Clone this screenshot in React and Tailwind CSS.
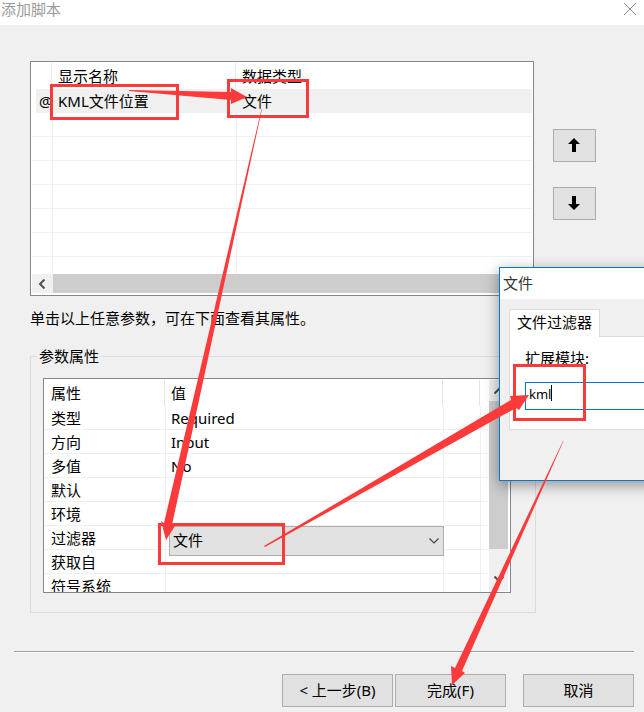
import clsx from "clsx";

const parameters = [
  { id: 1, mark: "@", name: "KML文件位置", type: "文件" },
  { id: 2 },
  { id: 3 },
  { id: 4 },
  { id: 5 },
  { id: 6 },
  { id: 7 },
  { id: 8 },
];

const properties = [
  { name: "类型", value: "Required" },
  { name: "方向", value: "Input" },
  { name: "多值", value: "No" },
  { name: "默认", value: "" },
  { name: "环境", value: "" },
  { name: "过滤器", value: "文件", filter: true },
  { name: "获取自", value: "" },
  { name: "符号系统", value: "" },
];

const HeaderCell = ({ children, className, last }) => (
  <th className="h-[27px] p-0 text-left font-normal">
    <div
      className={clsx(
        "h-[26px] leading-[26px] mr-px",
        !last && "border-r border-[#e5e5e5]",
        className
      )}
    >
      {children}
    </div>
  </th>
);

const DialogButton = ({ children, className, label }) => (
  <button
    aria-label={label}
    className={clsx(
      "h-[33px] flex items-center justify-center bg-[#e1e1e1] border border-[#adadad]",
      className
    )}
  >
    {children}
  </button>
);

const ParameterList = () => (
  <div className="flex-1 min-w-0 bg-white border border-[#828790] px-px pb-[2px]">
    <div className="h-[212px] overflow-hidden">
      <table className="w-full table-fixed border-separate border-spacing-0">
        <colgroup>
          <col className="w-[21px]" />
          <col className="w-[184px]" />
          <col />
        </colgroup>
        <thead>
          <tr>
            <HeaderCell />
            <HeaderCell className="pl-[5px]">显示名称</HeaderCell>
            <HeaderCell className="pl-[5px]" last>
              数据类型
            </HeaderCell>
          </tr>
        </thead>
        <tbody>
          {parameters.map((item) => {
            const rowStyle = item.mark
              ? "bg-[#f0f0f0] leading-6"
              : "border-b leading-[23px]";
            return (
              <tr key={item.id}>
                <td
                  className={clsx(
                    "h-6 p-0 border-r border-[#f0f0f0]",
                    !item.mark && "border-b"
                  )}
                >
                  {item.mark && (
                    <div className="ml-1 pl-[3px] bg-[#f0f0f0] leading-6">
                      {item.mark}
                    </div>
                  )}
                </td>
                <td
                  className={clsx(
                    "h-6 p-0 pl-[5px] border-r border-[#f0f0f0]",
                    rowStyle
                  )}
                >
                  {item.name}
                </td>
                <td
                  className={clsx("h-6 p-0 pl-[5px] border-[#f0f0f0]", rowStyle)}
                >
                  {item.type}
                </td>
              </tr>
            );
          })}
        </tbody>
      </table>
    </div>
    <div className="h-[19px] flex bg-[#cdcdcd]">
      <button
        aria-label="向左滚动"
        className="w-[21px] pr-[2px] flex items-center justify-center bg-[#f0f0f0]"
      >
        <svg className="w-2 h-[10px]" viewBox="0 0 8 10" fill="none">
          <path d="M6.5 .5 2 5l4.500 4.500" stroke="#505050" strokeWidth="2" />
        </svg>
      </button>
    </div>
  </div>
);

const PropertyTable = () => (
  <div className="mr-6 flex bg-white border border-[#828790] h-[215px]">
    <div className="flex-1 min-w-0 h-full pl-px overflow-hidden">
      <table className="w-full table-fixed border-separate border-spacing-0">
        <colgroup>
          <col className="w-[121px]" />
          <col />
          <col className="w-[37px]" />
          <col className="w-[7px]" />
        </colgroup>
        <thead>
          <tr>
            <HeaderCell className="pl-[6px]">属性</HeaderCell>
            <HeaderCell className="pl-[5px]">值</HeaderCell>
            <HeaderCell />
            <HeaderCell last />
          </tr>
        </thead>
        <tbody>
          {properties.map((item) => (
            <tr key={item.name} className="leading-[21px]">
              <td className="h-6 p-0 pt-[2px] pl-[6px] border-r border-b border-[#f0f0f0] whitespace-nowrap">
                {item.name}
              </td>
              <td className="relative h-6 p-0 pt-[2px] pl-[5px] border-r border-b border-[#f0f0f0]">
                {item.filter ? (
                  <div className="absolute z-10 left-[3px] -right-px top-0 h-[30px]">
                    <select
                      aria-label={item.name}
                      defaultValue={item.value}
                      className="w-full h-full appearance-none bg-[#e1e1e1] border border-[#adadad] pl-[3px] pb-[2px] rounded-none"
                    >
                      <option>{item.value}</option>
                    </select>
                    <svg
                      className="absolute right-[5px] top-3 w-[10px] h-[6px] pointer-events-none"
                      viewBox="0 0 10 6"
                      fill="none"
                    >
                      <path d="m.5.5 4.500 4.500L9.500.5" stroke="#444" strokeWidth="1.200" />
                    </svg>
                  </div>
                ) : (
                  item.value
                )}
              </td>
              <td className="h-6 p-0 border-r border-b border-[#f0f0f0]" />
              <td className="h-6 p-0 border-b border-[#f0f0f0]" />
            </tr>
          ))}
        </tbody>
      </table>
    </div>
    <div className="w-[19px] ml-px mr-[2px] my-px flex flex-col bg-[#f0f0f0]">
      <button aria-label="向上滚动" className="h-[21px] flex items-center justify-center">
        <svg className="w-[10px] h-2" viewBox="0 0 10 8" fill="none">
          <path d="M.5 6.500 5 2l4.500 4.500" stroke="#505050" strokeWidth="2" />
        </svg>
      </button>
      <div className="h-[148px] bg-[#cdcdcd]" />
      <button
        aria-label="向下滚动"
        className="flex-1 flex items-end justify-center pb-2"
      >
        <svg className="w-[10px] h-2" viewBox="0 0 10 8" fill="none">
          <path d="M.5 1.500 5 6l4.500-4.500" stroke="#505050" strokeWidth="2" />
        </svg>
      </button>
    </div>
  </div>
);

const FileDialog = () => (
  <div className="absolute z-20 left-[499px] top-[267px] w-[300px] h-[214px] bg-[#f0f0f0] border border-[#0078d7] shadow-[0_4px_14px_rgba(0,0,0,0.4)]">
    <div className="h-[31px] leading-[31px] pl-[3px] bg-white text-[#333]">文件</div>
    <div className="pl-[9px] pt-[10px]">
      <button className="relative z-10 block w-[91px] h-7 pb-[3px] bg-white border border-b-0 border-[#dcdcdc]">
        文件过滤器
      </button>
      <div className="-mt-px h-[94px] bg-white border border-[#dcdcdc] pl-[15px] pt-[10px]">
        <label htmlFor="ext" className="block h-[22px] leading-[22px]">
          扩展模块:
        </label>
        <div className="relative mt-[13px]">
          <input
            id="ext"
            defaultValue="kml"
            className="block w-full h-7 pl-[3px] pb-[5px] bg-white border border-[#0078d7] text-[13px] outline-none"
          />
          <span className="absolute left-[26px] top-[3px] w-px h-4 bg-black" />
        </div>
      </div>
    </div>
  </div>
);

// red frames and arrows over the dialogs
const Annotations = () => (
  <svg
    className="absolute z-30 left-0 top-0 w-[644px] h-[712px] pointer-events-none"
    viewBox="0 0 644 712"
    fill="#fc3a3a"
  >
    <g fill="none" stroke="#fc3a3a" strokeWidth="3">
      <rect x="51.500" y="85.500" width="126" height="33" />
      <rect x="228.500" y="80.500" width="79" height="36" />
      <rect x="159.500" y="524.500" width="124" height="39" />
      <rect x="514.500" y="365.500" width="70" height="54" />
    </g>
    <path d="M129 90 231 92V88L247 97 231 104V100L129 91Z" />
    <path d="M261.500 109 164 523 161 521 166 540 175 526 172 525 262 109Z" />
    <path d="M264 546 511 400 510 396 529 395 519 410 516 408 265 547Z" />
    <path d="M563 441 455 668 451 666 452 685 465 673 462 671 563.500 441Z" />
  </svg>
);

const App = () => {
  return (
    <div className="relative min-h-screen overflow-hidden bg-[#f0f0f0] text-black text-[15px] font-['Noto_Sans','Noto_Sans_CJK_SC',sans-serif]">
      <div className="h-[25px] flex items-center justify-between bg-white pl-px pr-2 text-[#999]">
        <span className="leading-5 pb-2">添加脚本</span>
        <button aria-label="关闭" className="pb-[7px]">
          <svg className="w-3 h-3" viewBox="0 0 12 12" fill="none">
            <path d="m0 0 12 12M12 0 0 12" stroke="#888" />
          </svg>
        </button>
      </div>

      <div className="pt-9 pl-[30px] pr-12 flex">
        <ParameterList />
        <div className="ml-[19px] pt-[68px] flex flex-col gap-[25px]">
          <DialogButton label="上移" className="w-[43px] pr-px pb-px">
            <svg className="w-3 h-[14px]" viewBox="0 0 12 14">
              <path d="M6 0 12 6H8V14H4V6H0Z" />
            </svg>
          </DialogButton>
          <DialogButton label="下移" className="w-[43px] pr-px pb-px">
            <svg className="w-3 h-[14px]" viewBox="0 0 12 14">
              <path d="M6 14 0 8H4V0H8V8H12Z" />
            </svg>
          </DialogButton>
        </div>
      </div>

      <p className="mt-[11px] ml-[30px] h-[22px] leading-[22px]">
        单击以上任意参数，可在下面查看其属性。
      </p>

      <fieldset className="mt-4 ml-[30px] mr-[108px] border border-[#dcdcdc] pl-3 pt-[11px] pb-[19px]">
        <legend className="-ml-[6px] px-[2px] h-[22px] leading-[22px]">参数属性</legend>
        <PropertyTable />
      </fieldset>

      <div className="mt-[38px] ml-[14px] mr-[10px] h-[2px] border-t border-[#a0a0a0] bg-white" />

      <div className="mt-[21px] pr-[10px] pb-[5px] flex justify-end">
        <DialogButton className="w-[111px]">&lt; 上一步(B)</DialogButton>
        <DialogButton className="w-[111px] ml-[2px]">完成(F)</DialogButton>
        <DialogButton className="w-[111px] ml-[17px]">取消</DialogButton>
      </div>

      <FileDialog />
      <Annotations />
    </div>
  );
};

export default App;
